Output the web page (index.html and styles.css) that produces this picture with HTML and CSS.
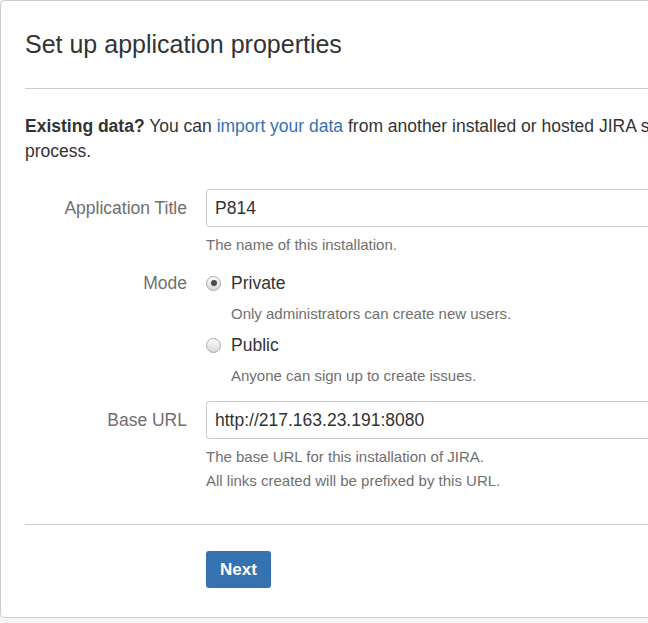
FILE: index.html
```html
<!DOCTYPE html>
<html lang="en">
<head>
  <meta charset="UTF-8" />
  <meta name="viewport" content="width=device-width, initial-scale=1.0" />
  <title>Set up application properties - JIRA</title>
  <link rel="stylesheet" href="styles.css">
</head>
<body>
  <div class="setup-card">
    <div class="setup-header">
      <h1>Set up application properties</h1>
    </div>

    <p class="intro"><strong>Existing data?</strong> You can <a href="#">import your data</a> from another installed or hosted JIRA server instead of completing this setup process.</p>

    <form class="setup-form">
      <div class="field-row">
        <label class="field-label" for="title">Application Title</label>
        <div class="field-control">
          <input type="text" id="title" class="text-input" value="P814">
          <div class="help">The name of this installation.</div>
        </div>
      </div>

      <div class="field-row mode-row">
        <div class="field-label">Mode</div>
        <div class="field-control">
          <div class="radio-option">
            <span class="radio checked"></span>
            <span>Private</span>
          </div>
          <div class="help indent">Only administrators can create new users.</div>
          <div class="radio-option">
            <span class="radio"></span>
            <span>Public</span>
          </div>
          <div class="help indent">Anyone can sign up to create issues.</div>
        </div>
      </div>

      <div class="field-row url-row">
        <label class="field-label" for="baseurl">Base URL</label>
        <div class="field-control">
          <input type="text" id="baseurl" class="text-input" value="http://217.163.23.191:8080">
          <div class="help">The base URL for this installation of JIRA.<br>All links created will be prefixed by this URL.</div>
        </div>
      </div>

      <div class="form-footer">
        <button type="button" class="btn-next">Next</button>
      </div>
    </form>
  </div>
</body>
</html>
```

FILE: styles.css
```css
body { margin: 0; background-color: #f5f5f5; font-family: "Liberation Sans", Arial, sans-serif; color: #333; overflow: hidden; }
.setup-card { width: 1100px; background: #fff; border: 1px solid #ccc; border-right: none; border-radius: 5px 0 0 5px; padding-bottom: 29px; }
.setup-header { margin-left: 24px; padding: 29px 0 30px; border-bottom: 1px solid #ccc; }
.setup-header h1 { margin: 0; font-size: 25px; font-weight: normal; line-height: 28px; color: #333; }
.intro { margin: 25px 0 0 24px; width: 980px; font-size: 17.5px; line-height: 25px; }
.intro a { color: #3572b0; text-decoration: none; }
.setup-form { margin: 25px 0 0; padding-left: 24px; }
.field-row { display: flex; gap: 19px; }
.field-label { width: 162px; flex: none; text-align: right; font-size: 17.5px; color: #707070; line-height: 38px; }
.field-control { flex: 1; }
.text-input { box-sizing: border-box; width: 100%; height: 38px; padding: 0 8px; border: 1px solid #ccc; border-radius: 3px; font-family: inherit; font-size: 17.5px; color: #333; }
.help { margin-top: 6px; font-size: 15px; line-height: 24px; color: #707070; }
.help.indent { margin: 7px 0 7px 25px; }
.mode-row { margin-top: 14px; }
.mode-row .field-label { line-height: 24px; }
.radio-option { display: flex; align-items: center; gap: 10px; font-size: 17.5px; line-height: 24px; }
.radio { box-sizing: border-box; width: 15px; height: 15px; border: 1px solid #aaa; border-radius: 50%; background: linear-gradient(#fdfdfd, #d8d8d8); display: flex; align-items: center; justify-content: center; }
.radio.checked::after { content: ""; width: 6px; height: 6px; border-radius: 50%; background: #4a4a4a; }
.url-row { margin-top: 6px; }
.form-footer { margin-top: 31px; padding: 26px 0 0 181px; border-top: 1px solid #ccc; }
.btn-next { height: 37px; padding: 0 14px; background-color: #3572b0; color: #fff; border: none; border-radius: 3px; font-family: inherit; font-size: 17px; font-weight: bold; cursor: pointer; }
```
